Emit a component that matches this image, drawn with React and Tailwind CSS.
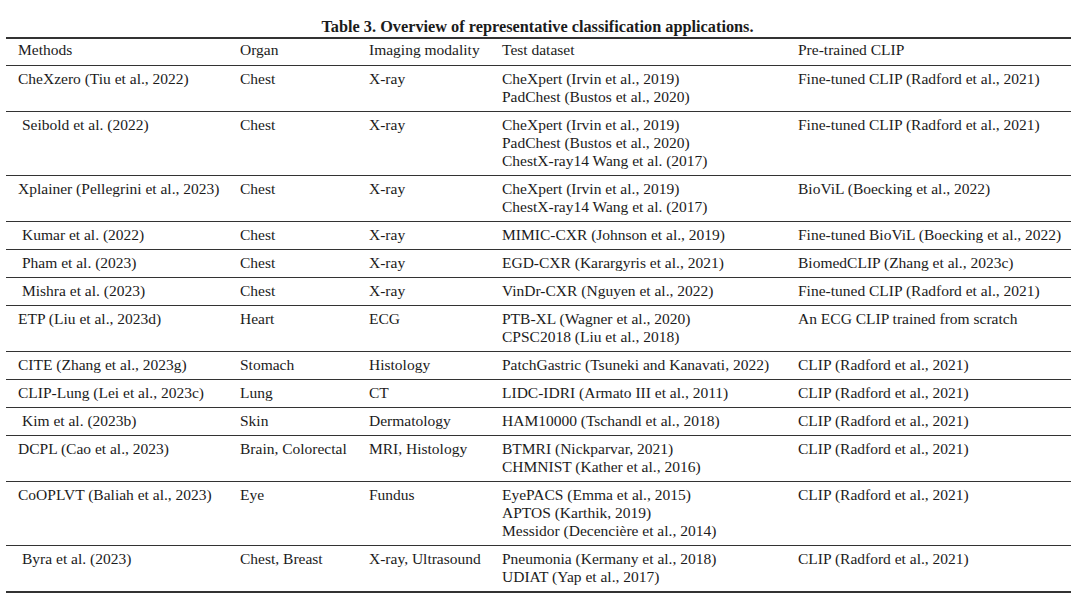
const rows = [
  { m: 'CheXzero (Tiu et al., 2022)', o: 'Chest', i: 'X-ray', t: ['CheXpert (Irvin et al., 2019)', 'PadChest (Bustos et al., 2020)'], c: 'Fine-tuned CLIP (Radford et al., 2021)' },
  { m: 'Seibold et al. (2022)', indent: true, o: 'Chest', i: 'X-ray', t: ['CheXpert (Irvin et al., 2019)', 'PadChest (Bustos et al., 2020)', 'ChestX-ray14 Wang et al. (2017)'], c: 'Fine-tuned CLIP (Radford et al., 2021)' },
  { m: 'Xplainer (Pellegrini et al., 2023)', o: 'Chest', i: 'X-ray', t: ['CheXpert (Irvin et al., 2019)', 'ChestX-ray14 Wang et al. (2017)'], c: 'BioViL (Boecking et al., 2022)' },
  { m: 'Kumar et al. (2022)', indent: true, o: 'Chest', i: 'X-ray', t: ['MIMIC-CXR (Johnson et al., 2019)'], c: 'Fine-tuned BioViL (Boecking et al., 2022)' },
  { m: 'Pham et al. (2023)', indent: true, o: 'Chest', i: 'X-ray', t: ['EGD-CXR (Karargyris et al., 2021)'], c: 'BiomedCLIP (Zhang et al., 2023c)' },
  { m: 'Mishra et al. (2023)', indent: true, o: 'Chest', i: 'X-ray', t: ['VinDr-CXR (Nguyen et al., 2022)'], c: 'Fine-tuned CLIP (Radford et al., 2021)' },
  { m: 'ETP (Liu et al., 2023d)', o: 'Heart', i: 'ECG', t: ['PTB-XL (Wagner et al., 2020)', 'CPSC2018 (Liu et al., 2018)'], c: 'An ECG CLIP trained from scratch' },
  { m: 'CITE (Zhang et al., 2023g)', o: 'Stomach', i: 'Histology', t: ['PatchGastric (Tsuneki and Kanavati, 2022)'], c: 'CLIP (Radford et al., 2021)' },
  { m: 'CLIP-Lung (Lei et al., 2023c)', o: 'Lung', i: 'CT', t: ['LIDC-IDRI (Armato III et al., 2011)'], c: 'CLIP (Radford et al., 2021)' },
  { m: 'Kim et al. (2023b)', indent: true, o: 'Skin', i: 'Dermatology', t: ['HAM10000 (Tschandl et al., 2018)'], c: 'CLIP (Radford et al., 2021)' },
  { m: 'DCPL (Cao et al., 2023)', o: 'Brain, Colorectal', i: 'MRI, Histology', t: ['BTMRI (Nickparvar, 2021)', 'CHMNIST (Kather et al., 2016)'], c: 'CLIP (Radford et al., 2021)' },
  { m: 'CoOPLVT (Baliah et al., 2023)', o: 'Eye', i: 'Fundus', t: ['EyePACS (Emma et al., 2015)', 'APTOS (Karthik, 2019)', 'Messidor (Decencière et al., 2014)'], c: 'CLIP (Radford et al., 2021)' },
  { m: 'Byra et al. (2023)', indent: true, o: 'Chest, Breast', i: 'X-ray, Ultrasound', t: ['Pneumonia (Kermany et al., 2018)', 'UDIAT (Yap et al., 2017)'], c: 'CLIP (Radford et al., 2021)' },
]

const grid = 'grid grid-cols-[234px_129px_133px_296px_1fr]'

export default function App() {
  return (
    <div className="w-[1080px] h-[609px] bg-white text-[#1b1b1b] font-['Liberation_Serif',serif] text-[15.5px] leading-[18px]">
      <div className="pt-[18px] pr-[5px] text-center font-bold text-[16.3px]">Table 3. Overview of representative classification applications.</div>
      <div className="ml-[6px] w-[1065px] mt-[1px] border-t-2 border-b-2 border-[#333]">
        <div className={`${grid} border-b border-[#333] pt-[2px] pb-[6px]`}>
          <div className="pl-[12px]">Methods</div>
          <div>Organ</div>
          <div>Imaging modality</div>
          <div>Test dataset</div>
          <div>Pre-trained CLIP</div>
        </div>
        {rows.map((r, k) => (
          <div key={k} className={`${grid} pt-[4px] pb-[5px] ${k < rows.length - 1 ? 'border-b border-[#333]' : ''}`}>
            <div className={r.indent ? 'pl-[16px]' : 'pl-[12px]'}>{r.m}</div>
            <div>{r.o}</div>
            <div>{r.i}</div>
            <div>
              {r.t.map(x => <div key={x}>{x}</div>)}
            </div>
            <div>{r.c}</div>
          </div>
        ))}
      </div>
    </div>
  )
}
